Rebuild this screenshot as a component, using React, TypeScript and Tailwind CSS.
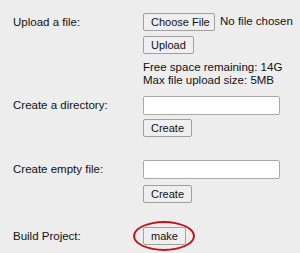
import React from 'react';

const font = { fontFamily: '"Liberation Sans", Arial, sans-serif' };

function Btn({ children, className = '' }: { children: React.ReactNode; className?: string }) {
  return (
    <button
      type="button"
      className={`h-[18px] px-[7px] whitespace-nowrap text-[11px] leading-none text-[#111] bg-[#efefef] border border-[#a0a0a0] rounded-[2px] ${className}`}
    >
      {children}
    </button>
  );
}

function Field() {
  return <div className="w-[137px] h-[19px] bg-white border border-[#a9a9a9] rounded-[2px]" />;
}

export default function App() {
  return (
    <div className="w-[300px] h-[253px] bg-[#ededed] overflow-hidden text-[11.5px] text-[#111]" style={font}>
      <div className="pl-[13px] pt-[13px] flex flex-col">
        <div className="flex">
          <div className="w-[130px] leading-[18px]">Upload a file:</div>
          <div className="flex flex-col">
            <div className="flex items-center gap-[5px] whitespace-nowrap">
              <Btn className="w-[72px] px-0">Choose File</Btn>
              <span>No file chosen</span>
            </div>
            <div className="mt-[5px]">
              <Btn>Upload</Btn>
            </div>
            <div className="mt-[7px] leading-[13px]">
              <div>Free space remaining: 14G</div>
              <div>Max file upload size: 5MB</div>
            </div>
          </div>
        </div>

        <div className="flex mt-[9px]">
          <div className="w-[130px] leading-[19px]">Create a directory:</div>
          <div className="flex flex-col">
            <Field />
            <div className="mt-[4px]">
              <Btn>Create</Btn>
            </div>
          </div>
        </div>

        <div className="flex mt-[23px]">
          <div className="w-[130px] leading-[19px]">Create empty file:</div>
          <div className="flex flex-col">
            <Field />
            <div className="mt-[6px]">
              <Btn>Create</Btn>
            </div>
          </div>
        </div>

        <div className="flex mt-[24px]">
          <div className="w-[130px] leading-[18px]">Build Project:</div>
          <div className="relative">
            <Btn>make</Btn>
            <div className="absolute left-[-10px] top-[-6px] w-[62px] h-[30px] rounded-[50%] border-2 border-[#c0141c] pointer-events-none" />
          </div>
        </div>
      </div>
    </div>
  );
}
